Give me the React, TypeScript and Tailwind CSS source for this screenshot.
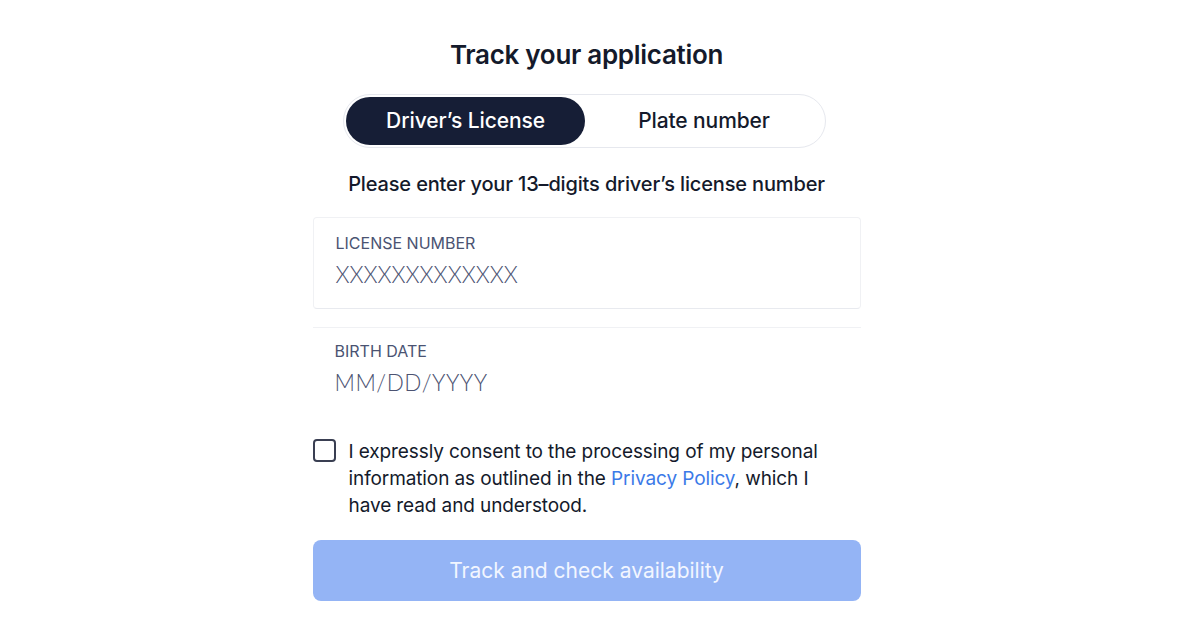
export default function App() {
  return (
    <div
      className="min-h-screen w-full bg-white flex justify-center pr-[27px]"
      style={{ fontFamily: "Inter, 'Noto Sans', sans-serif" }}
    >
      <div className="w-[548px] flex flex-col items-center pt-[38px]">
        {/* Title */}
        <h1 className="text-[26px] leading-[34px] font-semibold text-[#141a2b] tracking-[-0.3px]">
          Track your application
        </h1>

        {/* Toggle */}
        <div className="mt-[22px] ml-[-4px] w-[483px] h-[54px] rounded-full border border-[#e6e8ee] p-[2px] flex">
          <button className="w-[239px] h-full rounded-full bg-[#161e36] text-white text-[21px] font-medium tracking-[-0.1px]">
            Driver’s License
          </button>
          <button className="flex-1 h-full rounded-full text-[#141a2b] text-[21px] font-medium tracking-[-0.1px]">
            Plate number
          </button>
        </div>

        <p className="mt-[22px] text-[20px] leading-[28px] font-medium text-[#141a2b] tracking-[-0.15px]">
          Please enter your 13–digits driver’s license number
        </p>

        {/* Fields */}
        <div className="mt-[19px] w-full flex flex-col">
          <div className="h-[92px] border border-[#f0f1f4] border-b-[#e8eaef] rounded-[4px] px-[22px] pt-[14px]">
            <div className="text-[16px] leading-[22px] text-[#4a5372] uppercase">
              License number
            </div>
            <div
              className="mt-[7px] text-[22.5px] leading-[28px] text-[#4c5372] font-light"
              style={{ fontFamily: "Lato, sans-serif" }}
            >
              XXXXXXXXXXXXX
            </div>
          </div>
          <div className="mt-[18px] h-[92px] border-t border-[#f0f1f4] px-[22px] pt-[12px]">
            <div className="text-[16px] leading-[22px] text-[#4a5372] uppercase">
              Birth date
            </div>
            <div
              className="mt-[7px] text-[22.5px] leading-[28px] text-[#4c5372] font-light tracking-[0.5px]"
              style={{ fontFamily: "Lato, sans-serif" }}
            >
              MM/DD/YYYY
            </div>
          </div>
        </div>

        {/* Consent */}
        <div className="mt-[19px] w-full flex items-start gap-[13px]">
          <div className="mt-[1px] w-[23px] h-[23px] shrink-0 rounded-[4px] border-2 border-[#3a3f52]" />
          <p className="text-[19px] leading-[27px] text-[#141a2b] w-[490px] tracking-[-0.1px]">
            I expressly consent to the processing of my personal information as
            outlined in the <span className="text-[#3b7ae8]">Privacy Policy</span>,
            which I have read and understood.
          </p>
        </div>

        {/* Button */}
        <button className="mt-[21px] w-full h-[61px] rounded-[8px] bg-[#94b4f5] text-[#f2f6ff] text-[21px] font-normal">
          Track and check availability
        </button>
      </div>
    </div>
  );
}
